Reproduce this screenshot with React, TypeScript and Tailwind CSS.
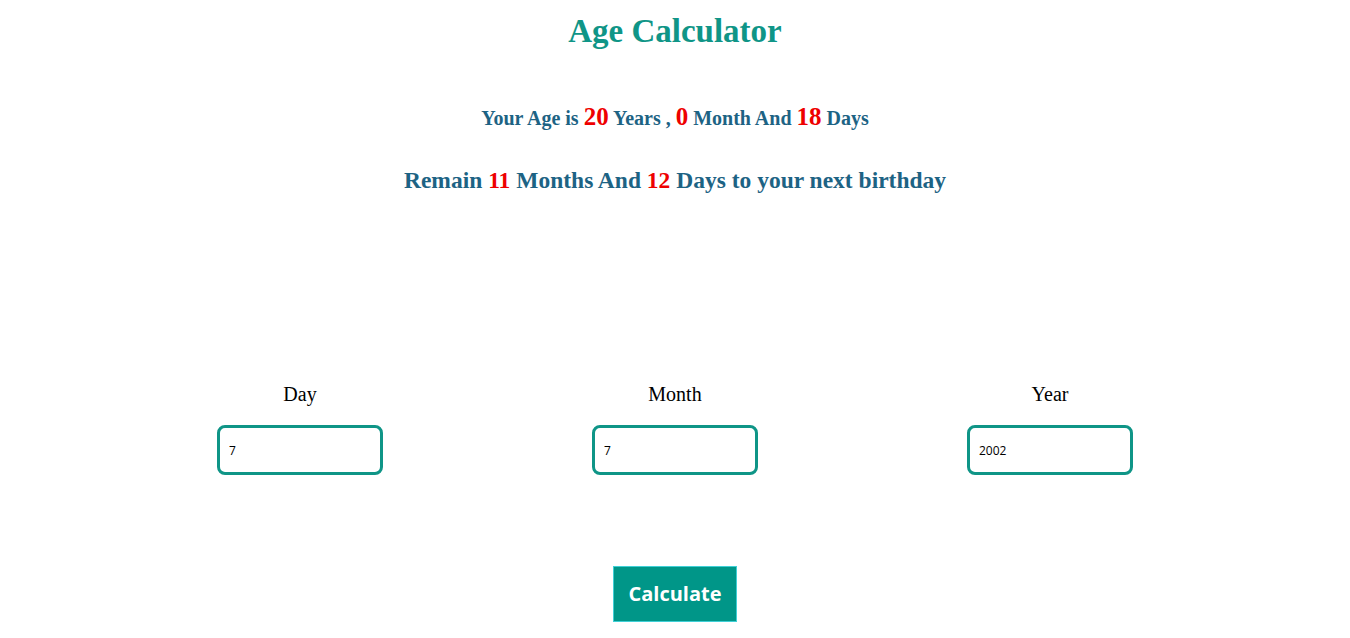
import { useState } from "react";

export default function App() {
  const [day, setDay] = useState("7");
  const [month, setMonth] = useState("7");
  const [year, setYear] = useState("2002");

  const fields = [
    { label: "Day", value: day, set: setDay },
    { label: "Month", value: month, set: setMonth },
    { label: "Year", value: year, set: setYear },
  ];

  return (
    <div className="min-h-[638px] bg-white font-['Liberation_Serif',serif] text-center">
      <h1 className="pt-[12px] text-[33px] leading-[38px] font-bold text-[#0f9587]">Age Calculator</h1>

      <p className="mt-[52px] text-[20px] leading-[30px] font-bold text-[#1d6384]">
        Your Age is <span className="text-[25px] text-[#ee0000]">20</span> Years ,{" "}
        <span className="text-[25px] text-[#ee0000]">0</span> Month And{" "}
        <span className="text-[25px] text-[#ee0000]">18</span> Days
      </p>

      <p className="mt-[32px] text-[23.5px] leading-[30px] font-bold text-[#1d6384]">
        Remain <span className="text-[#ee0000]">11</span> Months And{" "}
        <span className="text-[#ee0000]">12</span> Days to your next birthday
      </p>

      <div className="mx-auto mt-[186px] grid w-[1125px] grid-cols-3">
        {fields.map((f) => (
          <div key={f.label} className="flex flex-col items-center">
            <label className="text-[20px] leading-[26px] text-black">{f.label}</label>
            <input
              type="text"
              value={f.value}
              onChange={(e) => f.set(e.target.value)}
              className="mt-[18px] h-[50px] w-[166px] rounded-[8px] border-[3px] border-[#0f9587] px-[9px] font-['Open_Sans',sans-serif] text-[12px] text-black outline-none"
            />
          </div>
        ))}
      </div>

      <button className="mt-[91px] h-[56px] w-[124px] border border-[#3fd0d6] bg-[#009688] font-['Open_Sans',sans-serif] text-[20px] font-bold text-white">
        Calculate
      </button>
    </div>
  );
}
